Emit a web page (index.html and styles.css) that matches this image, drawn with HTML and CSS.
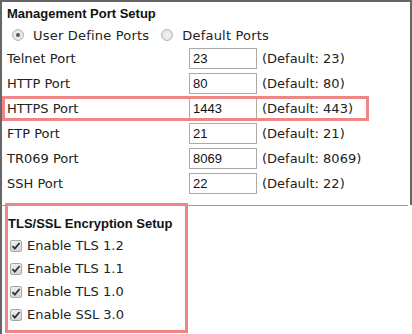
FILE: index.html
```html
<!DOCTYPE html>
<html>
<head>
    <title>Management Port Setup</title>
    <meta name="viewport" content="width=device-width, initial-scale=1.0">
    <link rel="stylesheet" href="styles.css">
</head>
<body>
    <div class="ports">
        <h2>Management Port Setup</h2>
        <div class="radios">
            <label class="opt"><span class="radio checked"></span>User Define Ports</label>
            <label class="opt"><span class="radio"></span>Default Ports</label>
        </div>
        <div class="row"><span class="lbl">Telnet Port</span><input class="port" value="23"><span class="def">(Default: 23)</span></div>
        <div class="row"><span class="lbl">HTTP Port</span><input class="port" value="80"><span class="def">(Default: 80)</span></div>
        <div class="row mark"><span class="lbl">HTTPS Port</span><input class="port" value="1443"><span class="def">(Default: 443)</span></div>
        <div class="row"><span class="lbl">FTP Port</span><input class="port" value="21"><span class="def">(Default: 21)</span></div>
        <div class="row"><span class="lbl">TR069 Port</span><input class="port" value="8069"><span class="def">(Default: 8069)</span></div>
        <div class="row"><span class="lbl">SSH Port</span><input class="port" value="22"><span class="def">(Default: 22)</span></div>
    </div>
    <div class="lower">
        <div class="tls">
            <h2>TLS/SSL Encryption Setup</h2>
            <label class="check"><span class="cb"><svg viewBox="0 0 12 12" width="12" height="12"><path d="M2.5 6.2 L4.8 8.6 L9.6 3" fill="none" stroke="#333" stroke-width="1.8"/></svg></span>Enable TLS 1.2</label>
            <label class="check"><span class="cb"><svg viewBox="0 0 12 12" width="12" height="12"><path d="M2.5 6.2 L4.8 8.6 L9.6 3" fill="none" stroke="#333" stroke-width="1.8"/></svg></span>Enable TLS 1.1</label>
            <label class="check"><span class="cb"><svg viewBox="0 0 12 12" width="12" height="12"><path d="M2.5 6.2 L4.8 8.6 L9.6 3" fill="none" stroke="#333" stroke-width="1.8"/></svg></span>Enable TLS 1.0</label>
            <label class="check"><span class="cb"><svg viewBox="0 0 12 12" width="12" height="12"><path d="M2.5 6.2 L4.8 8.6 L9.6 3" fill="none" stroke="#333" stroke-width="1.8"/></svg></span>Enable SSL 3.0</label>
        </div>
    </div>
</body>
</html>
```

FILE: styles.css
```css
body {
    margin: 0;
    width: 412px;
    height: 334px;
    overflow: hidden;
    background: white;
    font-family: "DejaVu Sans", Verdana, sans-serif;
    font-size: 13px;
    color: #222;
}
h2 {
    margin: 0;
    height: 20px;
    line-height: 20px;
    font-family: "Liberation Sans", Arial, sans-serif;
    font-size: 13px;
    font-weight: bold;
    color: #111;
}
.ports {
    border: 2px solid #666;
    border-bottom: none;
    height: 205px;
    box-sizing: border-box;
    padding: 2px 0 0 5px;
}
.radios {
    display: flex;
    align-items: center;
    height: 22px;
    padding-left: 5px;
}
.opt {
    display: flex;
    align-items: center;
    margin-right: 12px;
    letter-spacing: 0.2px;
}
.radio {
    width: 12px;
    height: 12px;
    box-sizing: border-box;
    border: 1px solid #b5b5b5;
    border-radius: 50%;
    background: radial-gradient(circle, #f4f4f4 0%, #dcdcdc 100%);
    margin-right: 9px;
    display: flex;
    align-items: center;
    justify-content: center;
}
.radio.checked::after {
    content: "";
    width: 4px;
    height: 4px;
    border-radius: 50%;
    background: #555;
}
.row {
    display: flex;
    align-items: center;
    height: 25px;
}
.row.mark {
    width: 367px;
    margin-left: -5px;
    padding-left: 5px;
    box-sizing: border-box;
    outline: 3px solid #ef8585;
    outline-offset: -3px;
}
.lbl {
    width: 182px;
}
.port {
    width: 68px;
    height: 21px;
    box-sizing: border-box;
    border: 1px solid #aaa;
    padding: 0 0 0 3px;
    margin: 0 5px 0 0;
    font-family: "Liberation Sans", Arial, sans-serif;
    font-size: 13px;
    color: #111;
    outline: none;
}
.def {
    white-space: nowrap;
}
.lower {
    border-left: 2px solid #666;
    border-top: 1px solid #9a9a9a;
    margin-right: 4px;
    height: 128px;
}
.tls {
    margin: -3px 0 0 3px;
    width: 183px;
    height: 130px;
    box-sizing: border-box;
    border: 3px solid #ef8585;
    padding: 8px 0 0 0;
    background: white;
}
.check {
    display: flex;
    align-items: center;
    height: 23px;
    padding-left: 2px;
}
.cb {
    width: 12px;
    height: 12px;
    box-sizing: border-box;
    border: 1px solid #a8a8a8;
    border-radius: 2px;
    background: linear-gradient(#eee, #d6d6d6);
    margin-right: 5px;
    display: flex;
}
.cb svg {
    margin: -1px;
}
```
